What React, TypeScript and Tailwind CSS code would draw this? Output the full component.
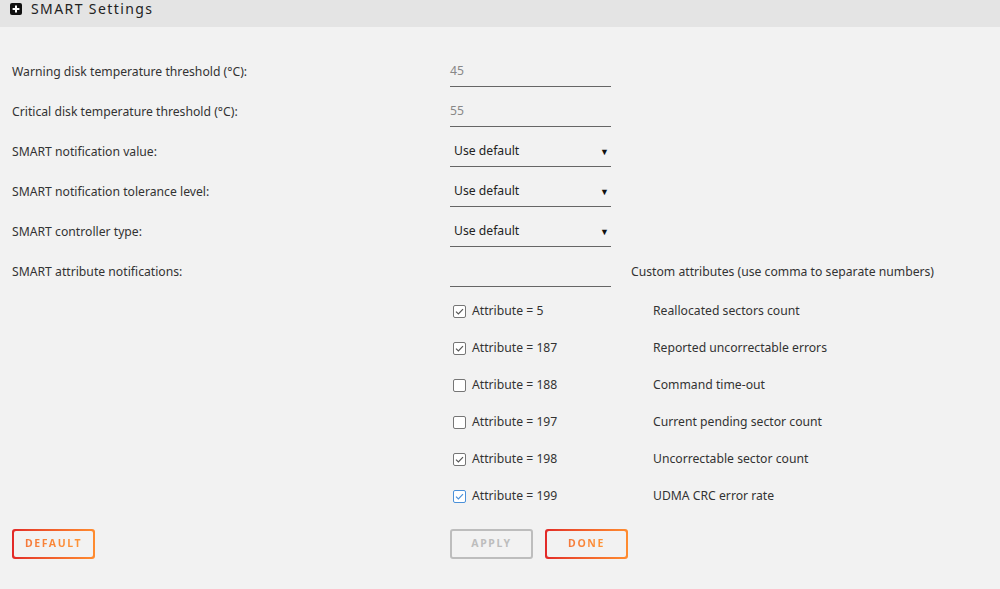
import React from "react";

const font = { fontFamily: '"Noto Sans", "Open Sans", sans-serif' };

const Check: React.FC<{ on: boolean; focus?: boolean }> = ({ on, focus }) => (
  <svg width="13" height="13" viewBox="0 0 13 13" className="shrink-0">
    <rect
      x="0.5"
      y="0.5"
      width="12"
      height="12"
      rx="1.5"
      fill="#fff"
      stroke={focus ? "#4a90d9" : "#767676"}
    />
    {on && (
      <path
        d="M3 6.6 L5.4 9 L10 4.2"
        fill="none"
        stroke={focus ? "#4a90d9" : "#555"}
        strokeWidth="1.2"
      />
    )}
  </svg>
);

const Row: React.FC<{ label: string; children: React.ReactNode }> = ({ label, children }) => (
  <div className="flex items-center h-10">
    <div className="w-[438px] text-[12.2px] text-[#333]">{label}</div>
    {children}
  </div>
);

const TextField: React.FC<{ value: string }> = ({ value }) => (
  <div className="w-[161px] h-[30px] flex items-center border-b border-[#666] text-[12.2px] text-[#888]">
    {value}
  </div>
);

const Select: React.FC = () => (
  <div className="w-[161px] h-[30px] flex items-center justify-between border-b border-[#666] text-[12.2px] text-[#222] pl-1 pr-[2px]">
    <span>Use default</span>
    <span className="text-[9px] text-[#111]">▼</span>
  </div>
);

const attrs = [
  { n: "5", on: true, d: "Reallocated sectors count" },
  { n: "187", on: true, d: "Reported uncorrectable errors" },
  { n: "188", on: false, d: "Command time-out" },
  { n: "197", on: false, d: "Current pending sector count" },
  { n: "198", on: true, d: "Uncorrectable sector count" },
  { n: "199", on: true, d: "UDMA CRC error rate", focus: true },
];

const GradButton: React.FC<{ label: string }> = ({ label }) => (
  <div className="w-[83px] h-[30px] rounded-[3px] p-[2px] bg-gradient-to-r from-[#e22828] to-[#ff8c2f]">
    <div className="w-full h-full rounded-[2px] bg-[#f2f2f2] flex items-center justify-center">
      <span className="text-[10.5px] font-bold tracking-[1.6px] bg-gradient-to-r from-[#f5783a] to-[#ff9535] bg-clip-text text-transparent">
        {label}
      </span>
    </div>
  </div>
);

export default function App() {
  return (
    <div className="w-[1000px] h-[589px] bg-[#f2f2f2] overflow-hidden" style={font}>
      <div className="h-[27px] bg-[#e4e4e4] flex items-start pt-[2px] pl-[10px] gap-[9px]">
        <svg width="12" height="12" viewBox="0 0 12 12" className="mt-[1px]">
          <rect width="12" height="12" rx="2" fill="#111" />
          <path d="M6 2.6 V9.4 M2.6 6 H9.4" stroke="#fff" strokeWidth="2" />
        </svg>
        <span className="text-[14px] leading-[14px] tracking-[1.4px] text-[#222]">SMART Settings</span>
      </div>

      <div className="pl-3 pt-[25px]">
        <Row label="Warning disk temperature threshold (°C):">
          <TextField value="45" />
        </Row>
        <Row label="Critical disk temperature threshold (°C):">
          <TextField value="55" />
        </Row>
        <Row label="SMART notification value:">
          <Select />
        </Row>
        <Row label="SMART notification tolerance level:">
          <Select />
        </Row>
        <Row label="SMART controller type:">
          <Select />
        </Row>
        <Row label="SMART attribute notifications:">
          <TextField value="" />
          <span className="ml-5 text-[12.2px] text-[#333]">
            Custom attributes (use comma to separate numbers)
          </span>
        </Row>

        <div className="pl-[438px] pt-[1px]">
          {attrs.map((a) => (
            <div key={a.n} className="flex items-center h-[37px] text-[12.2px] text-[#333]">
              <div className="w-[203px] flex items-center gap-[6px] pl-[3px]">
                <Check on={a.on} focus={a.focus} />
                <span>Attribute = {a.n}</span>
              </div>
              <span>{a.d}</span>
            </div>
          ))}
        </div>

        <div className="flex items-center mt-[14px]">
          <div className="w-[438px]">
            <GradButton label="DEFAULT" />
          </div>
          <div className="w-[83px] h-[30px] rounded-[3px] border-2 border-[#bdbdbd] flex items-center justify-center text-[10.5px] font-bold tracking-[1.6px] text-[#bdbdbd]">
            APPLY
          </div>
          <div className="ml-3">
            <GradButton label="DONE" />
          </div>
        </div>
      </div>
    </div>
  );
}
